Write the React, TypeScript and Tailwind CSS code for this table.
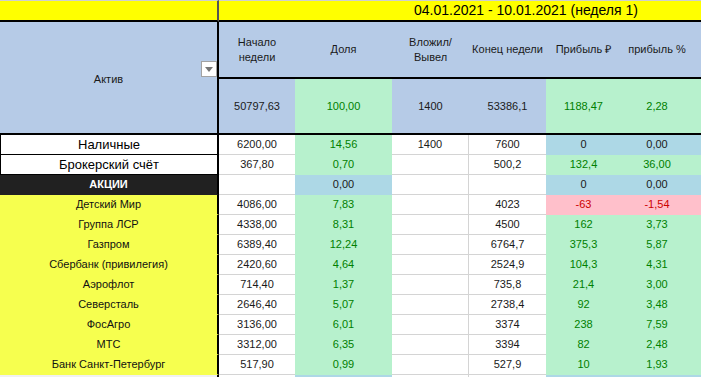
import React from 'react';

type Tone = 'w' | 'g' | 'b' | 'p';
type Cell = [string, Tone];

interface DataRow {
  name: string;
  kind: 'plain' | 'dark' | 'yellow' | 'gray';
  cells: Cell[];
}

const BG: Record<Tone, string> = {
  w: 'bg-white border-b-[#d4d4d4]',
  g: 'bg-[#b7f1cd] border-b-transparent text-[#008000]',
  b: 'bg-[#add8e6] border-b-transparent',
  p: 'bg-[#ffc0cb] border-b-transparent text-[#cc0000]',
};

const NAME: Record<DataRow['kind'], string> = {
  plain: 'bg-white border-l border-l-black border-b-black text-[13px] text-black',
  dark: 'bg-[#212121] border-b-transparent text-white font-bold',
  yellow: 'bg-[#f6ff4f] border-b-transparent text-[#111]',
  gray: 'bg-[#f1f1f1] border-b-transparent',
};

const rows: DataRow[] = [
  { name: 'Наличные', kind: 'plain', cells: [['6200,00', 'w'], ['14,56', 'g'], ['1400', 'w'], ['7600', 'w'], ['0', 'b'], ['0,00', 'b']] },
  { name: 'Брокерский счёт', kind: 'plain', cells: [['367,80', 'w'], ['0,70', 'g'], ['', 'w'], ['500,2', 'w'], ['132,4', 'g'], ['36,00', 'g']] },
  { name: 'АКЦИИ', kind: 'dark', cells: [['', 'w'], ['0,00', 'b'], ['', 'w'], ['', 'w'], ['0', 'b'], ['0,00', 'b']] },
  { name: 'Детский Мир', kind: 'yellow', cells: [['4086,00', 'w'], ['7,83', 'g'], ['', 'w'], ['4023', 'w'], ['-63', 'p'], ['-1,54', 'p']] },
  { name: 'Группа ЛСР', kind: 'yellow', cells: [['4338,00', 'w'], ['8,31', 'g'], ['', 'w'], ['4500', 'w'], ['162', 'g'], ['3,73', 'g']] },
  { name: 'Газпром', kind: 'yellow', cells: [['6389,40', 'w'], ['12,24', 'g'], ['', 'w'], ['6764,7', 'w'], ['375,3', 'g'], ['5,87', 'g']] },
  { name: 'Сбербанк (привилегия)', kind: 'yellow', cells: [['2420,60', 'w'], ['4,64', 'g'], ['', 'w'], ['2524,9', 'w'], ['104,3', 'g'], ['4,31', 'g']] },
  { name: 'Аэрофлот', kind: 'yellow', cells: [['714,40', 'w'], ['1,37', 'g'], ['', 'w'], ['735,8', 'w'], ['21,4', 'g'], ['3,00', 'g']] },
  { name: 'Северсталь', kind: 'yellow', cells: [['2646,40', 'w'], ['5,07', 'g'], ['', 'w'], ['2738,4', 'w'], ['92', 'g'], ['3,48', 'g']] },
  { name: 'ФосАгро', kind: 'yellow', cells: [['3136,00', 'w'], ['6,01', 'g'], ['', 'w'], ['3374', 'w'], ['238', 'g'], ['7,59', 'g']] },
  { name: 'МТС', kind: 'yellow', cells: [['3312,00', 'w'], ['6,35', 'g'], ['', 'w'], ['3394', 'w'], ['82', 'g'], ['2,48', 'g']] },
  { name: 'Банк Санкт-Петербург', kind: 'yellow', cells: [['517,90', 'w'], ['0,99', 'g'], ['', 'w'], ['527,9', 'w'], ['10', 'g'], ['1,93', 'g']] },
  { name: '', kind: 'gray', cells: [['', 'w'], ['', 'b'], ['', 'w'], ['', 'w'], ['', 'b'], ['', 'b']] },
];

const headers = [
  <>Начало<br />недели</>,
  'Доля',
  <>Вложил/<br />Вывел</>,
  'Конец недели',
  'Прибыль ₽',
  'прибыль %',
  '',
];

const totals: Cell[] = [
  ['50797,63', 'w'], ['100,00', 'g'], ['1400', 'w'], ['53386,1', 'w'], ['1188,47', 'g'], ['2,28', 'g'], ['', 'g'],
];

export default function App() {
  return (
    <div className="h-[377px] w-[701px] overflow-hidden bg-white font-['Liberation_Sans',Arial,sans-serif] text-[11px] text-[#1a1a1a]">
      <div className="grid w-[833px] grid-cols-[219px_76px_97px_77px_77px_75px_72px_140px]">
        {/* week title */}
        <div className="h-[22px] border-t border-r-2 border-b-2 border-t-[#cfcfcf] border-r-[#555] border-b-black bg-[#ffff00]" />
        <div className="col-span-7 flex h-[22px] items-center justify-center border-t border-b-2 border-t-[#cfcfcf] border-b-black bg-[#ffff00] text-[14px] text-black">
          04.01.2021 - 10.01.2021 (неделя 1)
        </div>

        {/* header */}
        <div className="relative row-span-2 flex items-center justify-center border-r-2 border-b-2 border-black bg-[#b6cbe7] pt-[3px]">
          Актив
          <div className="absolute right-0 top-[39px] flex h-4 w-4 items-center justify-center border border-[#a3a3a3] bg-white">
            <div className="h-0 w-0 border-x-[4px] border-t-[5px] border-x-transparent border-t-[#767676]" />
          </div>
        </div>
        {headers.map((h, i) => (
          <div key={i} className="flex h-[57px] items-center justify-center border-b-2 border-black bg-[#b6cbe7] text-center leading-[14.5px]">
            {h}
          </div>
        ))}
        {totals.map(([v, t], i) => (
          <div
            key={i}
            className={`flex h-[56px] items-center justify-center border-b-2 border-black ${t === 'g' ? 'bg-[#b7f1cd] text-[#008000]' : 'bg-[#b6cbe7]'}`}
          >
            {v}
          </div>
        ))}

        {/* assets */}
        {rows.map((r, ri) => (
          <React.Fragment key={ri}>
            <div className={`flex h-5 items-center justify-center border-r-2 border-b border-r-black ${NAME[r.kind]}`}>{r.name}</div>
            {[...r.cells, r.cells[5]].map(([v, t], ci) => (
              <div
                key={ci}
                className={`flex h-5 items-center justify-center border-b ${BG[t]} ${ci === 2 ? 'border-r border-r-[#d4d4d4]' : ''}`}
              >
                {ci === 6 ? '' : v}
              </div>
            ))}
          </React.Fragment>
        ))}
      </div>
    </div>
  );
}
